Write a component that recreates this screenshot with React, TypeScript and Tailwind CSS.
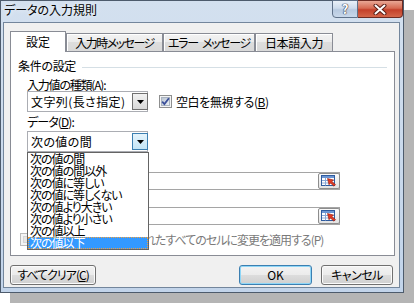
import React from "react";

const items = [
  "次の値の間",
  "次の値の間以外",
  "次の値に等しい",
  "次の値に等しくない",
  "次の値より大きい",
  "次の値より小さい",
  "次の値以上",
  "次の値以下",
];

function Tri() {
  return (
    <svg width="7" height="4" viewBox="0 0 7 4">
      <path d="M0 0H7L3.5 4Z" fill="#000" />
    </svg>
  );
}

function Combo({ text, open }: { text: string; open?: boolean }) {
  return (
    <div className="w-[121px] h-[21px] border border-[#abadb3] bg-white flex items-center">
      <span className="pl-[3px] flex-1 leading-[12px] whitespace-nowrap tracking-[0.4px]">{text}</span>
      <div
        className={
          open
            ? "w-[16px] h-[17px] mr-[-1px] border border-[#3c7fb1] bg-[linear-gradient(180deg,#e5f4fc_0%,#c4e5f6_100%)] flex items-center justify-center"
            : "w-[16px] h-[17px] mr-[-1px] border border-[#707070] bg-[linear-gradient(180deg,#f2f2f2_0%,#d8d8d8_100%)] flex items-center justify-center"
        }
      >
        <Tri />
      </div>
    </div>
  );
}

function RefIcon() {
  return (
    <svg width="16" height="12" viewBox="0 0 16 12">
      <rect x="0.5" y="0.5" width="13" height="10" fill="#fff" stroke="#2f5b9e" />
      <rect x="1" y="1" width="12" height="2" fill="#6b95d3" />
      <path d="M1 5.5H13M1 8H13M4.5 3V10.5" stroke="#8aa8d6" strokeWidth="1" />
      <path d="M6.5 3.5L12.5 5L10.8 6.4L14.5 9.6L13 11.2L9.4 8L8 9.8Z" fill="#e23a22" stroke="#8a1a10" strokeWidth="0.6" />
    </svg>
  );
}

function RefInput() {
  return (
    <div className="w-[313px] h-[18px] border border-[#a5a5a5] bg-white flex items-center justify-end">
      <div className="w-[22px] h-[16px] mr-[-1px] border border-[#8d8d8d] rounded-[2px] bg-[linear-gradient(180deg,#fbfbfb_0%,#e3e3e3_100%)] flex items-center justify-center">
        <RefIcon />
      </div>
    </div>
  );
}

function Btn({ children, def, w }: { children: React.ReactNode; def?: boolean; w: string }) {
  return (
    <div
      className={
        (def
          ? "border-[#3c7fb1] shadow-[inset_0_0_0_1px_#8ed6f7] "
          : "border-[#707070] shadow-[inset_0_0_0_1px_#fbfbfb] ") +
        w +
        " h-[20px] border rounded-[3px] bg-[linear-gradient(180deg,#f3f3f3_0%,#ebebeb_50%,#dddddd_50%,#cfcfcf_100%)] flex items-center justify-center leading-[12px]"
      }
    >
      {children}
    </div>
  );
}

export default function App() {
  return (
    <div className="w-[414px] h-[304px] bg-white overflow-hidden text-[12px] leading-[12px] text-black font-['Noto_Sans_CJK_JP','Noto_Sans',sans-serif] [font-feature-settings:'palt']">
      <div className="w-[404px] h-[293px] flex flex-col border border-[#4d5b6c] bg-[linear-gradient(180deg,#d3e0ef_0%,#c2d4ea_100%)] shadow-[10px_10px_0_0_#b5b5b5]">
        {/* title bar */}
        <div className="h-[21px] shrink-0 flex items-start">
          <span className="pl-[3px] pt-[2px] leading-[14px] text-[12px] whitespace-nowrap [text-shadow:0_0_5px_#ffffff]">
            データの入力規則
          </span>
          <div className="ml-auto flex -mt-px">
            <div className="w-[26px] h-[18px] border border-[#5f7189] rounded-bl-[4px] bg-[linear-gradient(180deg,#e9f0f8_0%,#cddbec_45%,#b7c9e0_55%,#c9d8ea_100%)] flex items-center justify-center text-[13px] font-bold text-white [text-shadow:0_0_1px_#334,0_0_1px_#334,0_0_1px_#334]">
              ?
            </div>
            <div className="w-[45px] h-[18px] border border-l-0 border-[#6e2b22] rounded-br-[4px] bg-[linear-gradient(180deg,#e9a795_0%,#d66a52_45%,#c4402a_55%,#d4664a_100%)] flex items-center justify-center">
              <svg width="14" height="11" viewBox="0 0 14 11">
                <path d="M2.5 1.5L11.5 9.5M11.5 1.5L2.5 9.5" stroke="#5a1e16" strokeWidth="4" strokeLinecap="round" />
                <path d="M2.5 1.5L11.5 9.5M11.5 1.5L2.5 9.5" stroke="#ffffff" strokeWidth="2" strokeLinecap="round" />
              </svg>
            </div>
          </div>
        </div>

        {/* client area */}
        <div className="ml-[2px] mr-[3px] mb-[4px] flex-1 border border-[#73869c] bg-[#f0f0f0] flex flex-col pt-[8px] pl-[6px] pr-[4px]">
          {/* tabs */}
          <div className="flex items-end h-[20px]">
            <div className="relative z-10 w-[56px] h-[21px] -mb-px bg-white border border-b-0 border-[#898c95] flex items-center justify-center">
              設定
            </div>
            <div className="w-[97px] h-[18px] border border-b-0 border-[#898c95] bg-[linear-gradient(180deg,#f3f3f3_0%,#ebebeb_50%,#dddddd_50%,#d9d9d9_100%)] shadow-[inset_1px_1px_0_#ffffff] flex items-center justify-center whitespace-nowrap tracking-[-1.5px]">
              入力時メッセージ
            </div>
            <div className="w-[92px] h-[18px] border border-b-0 border-[#898c95] bg-[linear-gradient(180deg,#f3f3f3_0%,#ebebeb_50%,#dddddd_50%,#d9d9d9_100%)] shadow-[inset_1px_1px_0_#ffffff] flex items-center justify-center whitespace-nowrap tracking-[-1.3px]">
              <span>エラー</span>
              <span className="ml-[4px]">メッセージ</span>
            </div>
            <div className="w-[78px] h-[18px] border border-b-0 border-[#898c95] bg-[linear-gradient(180deg,#f3f3f3_0%,#ebebeb_50%,#dddddd_50%,#d9d9d9_100%)] shadow-[inset_1px_1px_0_#ffffff] flex items-center justify-center whitespace-nowrap tracking-[-0.4px]">
              日本語入力
            </div>
          </div>

          {/* panel */}
          <div className="w-[385px] h-[205px] border border-[#898c95] bg-white flex flex-col">
            <div className="mt-[8px] h-[12px] flex items-start pl-[7px] pr-[7px]">
              <span className="whitespace-nowrap tracking-[-0.3px]">条件の設定</span>
              <div className="flex-1 h-px mt-[7px] ml-[6px] bg-[#d5dfe5]" />
            </div>
            <div className="mt-[7px] h-[12px] pl-[16px] whitespace-nowrap tracking-[-1.2px]">
              入力値の種類(<span className="underline">A</span>):
            </div>
            <div className="h-[21px] pl-[16px] flex items-center">
              <Combo text="文字列(長さ指定)" />
              <div className="ml-[11px] w-[13px] h-[13px]">
                <svg width="13" height="13" viewBox="0 0 13 13">
                  <defs>
                    <linearGradient id="cbg" x1="0" y1="0" x2="1" y2="1">
                      <stop offset="0" stopColor="#b8c2cf" />
                      <stop offset="1" stopColor="#eef2f7" />
                    </linearGradient>
                  </defs>
                  <rect x="0.5" y="0.5" width="12" height="12" fill="#f4f4f4" stroke="#8e8f8f" />
                  <rect x="2.5" y="2.5" width="8" height="8" fill="url(#cbg)" stroke="#a9b3c0" />
                  <path d="M3.2 6.6L5.4 9L9.9 3.3" stroke="#3b4f9a" strokeWidth="1.8" fill="none" />
                </svg>
              </div>
              <span className="ml-[4px] whitespace-nowrap tracking-[-0.4px]">
                空白を無視する(<span className="underline">B</span>)
              </span>
            </div>
            <div className="mt-[4px] h-[12px] pl-[16px] whitespace-nowrap tracking-[-0.9px]">
              データ(<span className="underline">D</span>):
            </div>
            <div className="mt-[3px] pl-[16px]">
              <div className="relative w-[121px]">
                <Combo text="次の値の間" open />
                <div className="absolute z-20 left-0 top-[21px] w-[122px] border border-[#646464] bg-white tracking-[-1px]">
                  {items.map((t, i) =>
                    i === items.length - 1 ? (
                      <div
                        key={t}
                        className="h-[12px] leading-[10px] pl-px border border-dotted border-[#f0a040] bg-[#3399ff] text-white whitespace-nowrap"
                      >
                        {t}
                      </div>
                    ) : (
                      <div key={t} className="h-[12px] leading-[12px] pl-[2px] whitespace-nowrap">
                        {t}
                      </div>
                    )
                  )}
                </div>
              </div>
            </div>
            {/* label 最小値(M): lies under the open list */}
            <div className="mt-[4px] h-[12px]" />
            <div className="mt-[4px] pl-[16px]">
              <RefInput />
            </div>
            {/* label 最大値(X): lies under the open list */}
            <div className="mt-[3px] h-[12px]" />
            <div className="mt-[2px] pl-[16px]">
              <RefInput />
            </div>
            <div className="mt-[8px] h-[13px] pl-[9px] flex items-center">
              <div className="w-[13px] h-[13px] border border-[#bcbcbc] bg-[#f4f4f4] p-[2px]">
                <div className="w-full h-full bg-[#e6e6e6] border border-[#d6d6d6]" />
              </div>
              <span className="ml-[4px] whitespace-nowrap text-[#7a7a7a] tracking-[-1px]">
                同じ入力規則が設定されたすべてのセルに変更を適用する(P)
              </span>
            </div>
          </div>

          {/* buttons */}
          <div className="mt-[9px] h-[20px] flex pr-[2px]">
            <Btn w="w-[86px]">
              <span className="tracking-[-1px]">
                すべてクリア(<span className="underline">C</span>)
              </span>
            </Btn>
            <div className="ml-auto flex gap-[9px]">
              <Btn def w="w-[73px]">OK</Btn>
              <Btn w="w-[72px]">
                <span className="tracking-[-0.5px]">キャンセル</span>
              </Btn>
            </div>
          </div>
        </div>
      </div>
    </div>
  );
}
